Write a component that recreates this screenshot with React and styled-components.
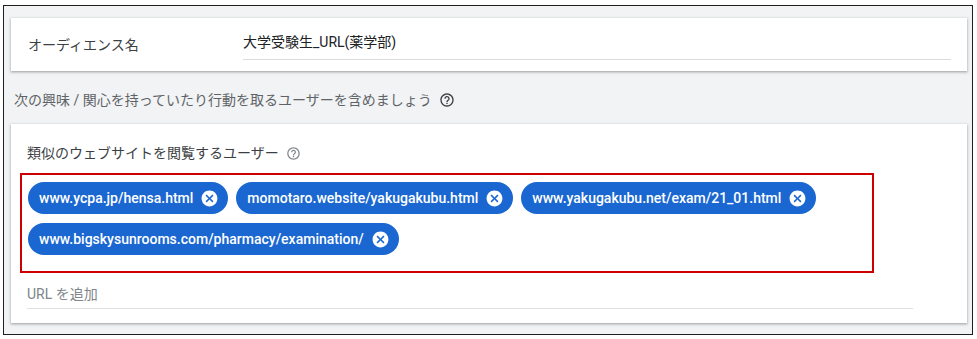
import React from 'react'
import styled, { createGlobalStyle } from 'styled-components'
import { MdCancel, MdHelpOutline } from 'react-icons/md'

const urls = [
    'www.ycpa.jp/hensa.html',
    'momotaro.website/yakugakubu.html',
    'www.yakugakubu.net/exam/21_01.html',
    'www.bigskysunrooms.com/pharmacy/examination/',
]

const App = () => {
    return (
        <>
            <GlobalStyle />
            <Frame>
                <Card>
                    <NameRow>
                        <Label>オーディエンス名</Label>
                        <Field>大学受験生_URL(薬学部)</Field>
                    </NameRow>
                </Card>

                <Hint>
                    次の興味 / 関心を持っていたり行動を取るユーザーを含めましょう
                    <HelpIcon size={16} color="#3c4043" />
                </Hint>

                <Card pad="19px 16px 14px">
                    <Title>
                        類似のウェブサイトを閲覧するユーザー
                        <HelpIcon size={15} color="#80868b" />
                    </Title>
                    <ChipBox>
                        {urls.map(url => (
                            <Chip key={url}>
                                {url}
                                <MdCancel size={19} color="#ffffff" />
                            </Chip>
                        ))}
                    </ChipBox>
                    <AddUrl>URL を追加</AddUrl>
                </Card>
            </Frame>
        </>
    )
}

const GlobalStyle = createGlobalStyle`
  body {
    margin: 0;
    background: #ffffff;
    font-family: Roboto, "Noto Sans CJK JP", sans-serif;
  }
`;

const Frame = styled.div`
  box-sizing: border-box;
  margin: 5px 0 0 3px;
  width: 970px;
  height: 330px;
  border: 1px solid #1f1f1f;
  background: #f1f3f4;
  padding: 12px 5px 0 7px;
`;

const Card = styled.div`
  background: #ffffff;
  box-shadow: 0 1px 2px rgba(60, 64, 67, 0.35), 0 1px 3px 1px rgba(60, 64, 67, 0.12);
  padding: ${props => props.pad || '14px 16px 11px 17px'};
`;

const NameRow = styled.div`
  display: flex;
  align-items: flex-end;
`;

const Label = styled.div`
  width: 215px;
  font-size: 14px;
  line-height: 20px;
  color: #3c4043;
  padding-bottom: 5px;
`;

const Field = styled.div`
  flex: 1;
  font-size: 14px;
  line-height: 20px;
  color: #202124;
  padding-bottom: 7px;
  border-bottom: 1px solid #dadce0;
`;

const Hint = styled.div`
  display: flex;
  align-items: center;
  gap: 5px;
  font-size: 14px;
  line-height: 20px;
  color: #5f6368;
  margin: 19px 0 14px 3px;
`;

const HelpIcon = styled(MdHelpOutline)`
  margin-left: 2px;
`;

const Title = styled.div`
  display: flex;
  align-items: center;
  gap: 5px;
  font-size: 14px;
  line-height: 20px;
  color: #3c4043;
`;

const ChipBox = styled.div`
  box-sizing: border-box;
  width: 854px;
  margin: 10px 0 0 -7px;
  border: 2px solid #cc0000;
  padding: 7px 6px 16px;
  display: flex;
  flex-wrap: wrap;
  gap: 9px 8px;
`;

const Chip = styled.div`
  display: flex;
  align-items: center;
  gap: 7px;
  height: 32px;
  box-sizing: border-box;
  padding: 0 9px 0 11px;
  border-radius: 16px;
  background: #1a67d2;
  color: #ffffff;
  font-size: 14px;
  font-weight: 500;
`;

const AddUrl = styled.div`
  margin-top: 11px;
  margin-right: 38px;
  font-size: 14px;
  line-height: 20px;
  color: #80868b;
  padding-bottom: 4px;
  border-bottom: 1px solid #e0e0e0;
`;

export default App;
